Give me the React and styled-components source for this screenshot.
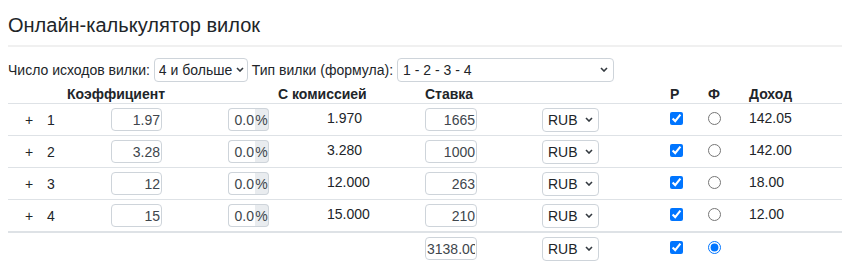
import React from 'react';
import styled, { createGlobalStyle } from 'styled-components';

const chevron =
  "url(\"data:image/svg+xml,%3Csvg xmlns='http://www.w3.org/2000/svg' width='8' height='5' viewBox='0 0 8 5'%3E%3Cpath d='M1 1l3 3 3-3' fill='none' stroke='%23343a40' stroke-width='1.6'/%3E%3C/svg%3E\")";

const GlobalStyle = createGlobalStyle`
  body {
    margin: 8px;
    background: #fff;
    font-family: "Liberation Sans", Arial, sans-serif;
    font-size: 14px;
    color: #212529;
  }
`;

// column widths of the bet table
const COLS = '36px 67px 117px 99px 98px 117px 128px 38px 41px 96px';

const rows = [
  { n: 1, k: '1.97', net: '1.970', stake: '1665', income: '142.05' },
  { n: 2, k: '3.28', net: '3.280', stake: '1000', income: '142.00' },
  { n: 3, k: '12', net: '12.000', stake: '263', income: '18.00' },
  { n: 4, k: '15', net: '15.000', stake: '210', income: '12.00' },
];

export default function App() {
  return (
    <Page>
      <GlobalStyle />
      <Title>Онлайн-калькулятор вилок</Title>
      <Divider />
      <FormLine>
        <span>Число исходов вилки:</span>
        <Select $w={94} $tight defaultValue="4">
          <option value="4">4 и больше</option>
        </Select>
        <span>Тип вилки (формула):</span>
        <Select $w={217} defaultValue="1">
          <option value="1">1 - 2 - 3 - 4</option>
        </Select>
      </FormLine>

      <HeadRow>
        <Th $col="1 / 4" $pad={59}>Коэффициент</Th>
        <Th $col="4 / 6" $pad={50}>С комиссией</Th>
        <Th $col="6">Ставка</Th>
        <Th $col="8">Р</Th>
        <Th $col="9">Ф</Th>
        <Th $col="10">Доход</Th>
      </HeadRow>

      {rows.map((r, i) => (
        <Row key={r.n} $thick={i === rows.length - 1}>
          <Plus>+</Plus>
          <Num>{r.n}</Num>
          <Cell><NumInput $w={51} defaultValue={r.k} /></Cell>
          <Cell>
            <Group>
              <GroupInput defaultValue="0.0" />
              <Addon>%</Addon>
            </Group>
          </Cell>
          <Value>{r.net}</Value>
          <Cell><NumInput $w={52} defaultValue={r.stake} /></Cell>
          <Cell>
            <Select $w={57} defaultValue="RUB">
              <option>RUB</option>
            </Select>
          </Cell>
          <Cell><Check type="checkbox" defaultChecked /></Cell>
          <Cell><Check type="radio" name="fix" /></Cell>
          <Value>{r.income}</Value>
        </Row>
      ))}

      <Row $last>
        <Cell $col={6}><NumInput $w={52} defaultValue="3138.00" /></Cell>
        <Cell>
          <Select $w={57} defaultValue="RUB">
            <option>RUB</option>
          </Select>
        </Cell>
        <Cell><Check type="checkbox" defaultChecked /></Cell>
        <Cell><Check type="radio" name="fix" defaultChecked /></Cell>
      </Row>
    </Page>
  );
}

const Page = styled.div`
  width: 837px;
`;

const Title = styled.h1`
  margin: 5px 0 0;
  font-size: 20px;
  line-height: 24px;
  font-weight: 400;
  color: #212529;
`;

const Divider = styled.div`
  margin-top: 8px;
  border-top: 2px solid #f0f0f0;
  width: 842px;
`;

const FormLine = styled.div`
  display: flex;
  align-items: center;
  gap: 4px;
  margin-top: 10px;
  height: 25px;
  font-size: 14px;
`;

const Select = styled.select`
  appearance: none;
  width: ${p => p.$w}px;
  height: 24px;
  padding: ${p => (p.$tight ? '0 10px 0 4px' : '0 14px 0 5px')};
  border: 1px solid #ced4da;
  border-radius: 4px;
  background: #fff ${chevron} no-repeat right ${p => (p.$tight ? 3 : 5)}px center;
  font-family: inherit;
  font-size: 14px;
  color: #212529;
`;

const HeadRow = styled.div`
  display: grid;
  grid-template-columns: ${COLS};
  margin-top: 2px;
  height: 19px;
  align-items: center;
  border-bottom: 1px solid #dee2e6;
`;

const Th = styled.div`
  grid-column: ${p => p.$col};
  padding-left: ${p => p.$pad || 0}px;
  font-weight: 700;
  font-size: 14px;
`;

const Row = styled.div`
  display: grid;
  grid-template-columns: ${COLS};
  height: 31px;
  align-items: center;
  border-bottom: ${p => (p.$last ? 'none' : p.$thick ? '2px solid #dee2e6' : '1px solid #dee2e6')};
`;

const Cell = styled.div`
  display: flex;
  align-items: center;
  ${p => p.$col && `grid-column: ${p.$col};`}
`;

const Plus = styled.div`
  padding-left: 17px;
`;

const Num = styled.div`
  padding-left: 3px;
`;

const Value = styled.div`
  margin-top: -3px;
`;

const NumInput = styled.input`
  box-sizing: border-box;
  width: ${p => p.$w}px;
  height: 23px;
  padding: 0 1px;
  border: 1px solid #ced4da;
  border-radius: 4px;
  text-align: right;
  font-family: inherit;
  font-size: 14px;
  color: #40464c;
`;

const Group = styled.div`
  display: flex;
  height: 23px;
`;

const GroupInput = styled.input`
  box-sizing: border-box;
  width: 27px;
  height: 23px;
  padding: 0 1px;
  border: 1px solid #ced4da;
  border-right: none;
  border-radius: 4px 0 0 4px;
  text-align: right;
  font-family: inherit;
  font-size: 14px;
  color: #40464c;
`;

const Addon = styled.span`
  box-sizing: border-box;
  width: 14px;
  display: flex;
  align-items: center;
  justify-content: center;
  background: #e9ecef;
  border: 1px solid #ced4da;
  border-left: none;
  border-radius: 0 4px 4px 0;
  color: #40464c;
  font-size: 14px;
`;

const Check = styled.input`
  margin: -3px 0 0 0;
  width: 13px;
  height: 13px;
`;
